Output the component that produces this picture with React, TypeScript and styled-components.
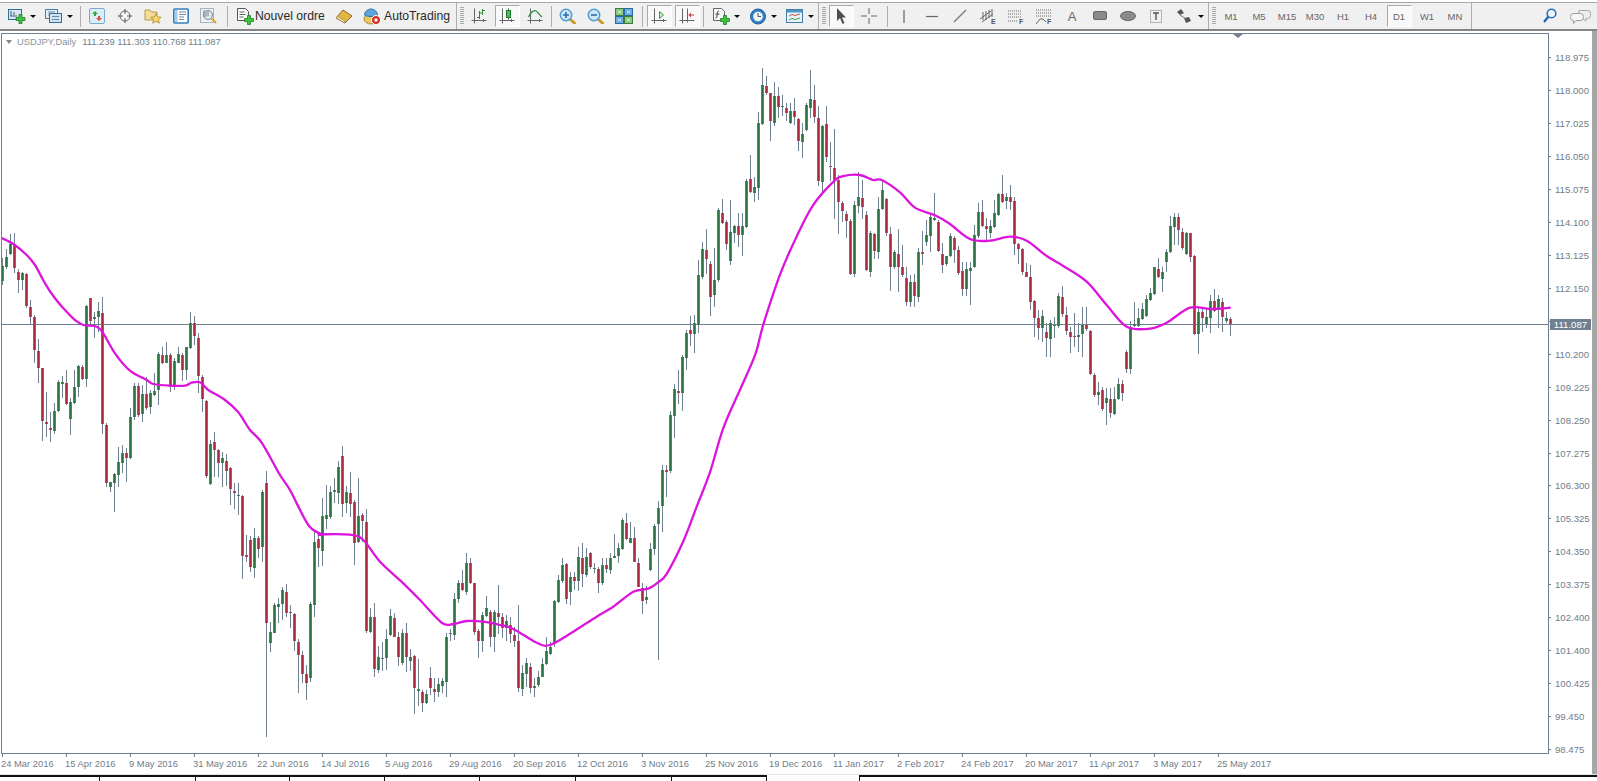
import React from "react";
import styled, { createGlobalStyle } from "styled-components";

type Bar = [number, number, number, number, number];
const G = 1;
const R = 0;

// candle values are read per section of the chart, so each one has its own offset and scale
const sectionA: Bar[] = [
	[85,108,152,165,G],[57,82,110,117,G],[12,42,73,75,G],[8,42,115,130,R],[118,125,150,190,R],[125,130,150,180,G],[130,133,228,233,R],[210,232,260,282,R],
	[255,262,360,398,R],[328,362,415,460,R],[415,415,572,632,R],[485,576,581,620,R],[545,595,601,635,R],[518,542,602,612,G],[450,457,542,545,G],[438,455,463,505,G],
	[420,458,523,525,R],[505,515,568,615,G],[420,472,518,522,G],[405,408,472,500,G],[405,412,448,450,R],[225,228,448,470,G],[203,205,272,282,R],[245,262,268,325,G],
	[215,243,262,305,G],[202,250,582,612,R],[578,585,760,770,R],[755,757,772,785,G],[730,732,758,845,G],[650,697,735,772,G],[645,670,700,728,G],[655,670,683,755,R],
	[535,562,685,688,G],[460,468,562,570,G],[458,468,555,560,R],[465,492,553,575,G],[440,492,535,540,R],[480,490,532,552,G],[430,482,495,498,G],[365,372,480,525,G],
	[352,376,398,402,R],[335,376,398,400,G],[368,376,470,485,R],[385,393,468,480,G],[350,373,398,400,G],[370,376,420,452,R],[350,352,420,450,G],[245,280,355,358,G],
	[258,280,318,345,R],[310,325,438,490,R],[435,440,508,545,R],[510,512,738,745,R],[630,643,763,765,G],[605,637,660,740,R],[658,660,700,740,R],[665,685,700,772,G],
	[672,692,722,768,R],[712,715,778,825,R],[758,783,788,838,R],[758,795,799,855,G],[795,798,977,1048,R],[915,975,980,995,R],[918,930,1010,1025,R],[895,925,1015,1045,G],
	[918,925,958,985,R],[780,785,952,995,G],[722,758,1178,1520,R],[1175,1205,1238,1265,G],[1118,1125,1208,1210,G],[1105,1122,1130,1180,G],[1070,1080,1122,1170,G],[1062,1085,1148,1162,R],
	[1125,1145,1150,1195,R],[1150,1152,1232,1262,R],[1228,1235,1275,1388,R],[1263,1275,1332,1360,R],[1305,1332,1360,1410,R],[1115,1122,1345,1355,G],[905,935,1125,1160,G],[905,928,955,1010,R],
];
const sectionB: Bar[] = [
	[205,258,362,408,G],[165,255,268,298,G],[168,185,262,268,G],[145,180,185,220,G],[92,112,188,222,G],[48,78,222,260,R],[168,185,218,248,G],[125,190,222,260,R],
	[210,217,338,405,R],[145,258,335,340,G],[250,255,272,335,R],[238,275,602,608,R],[535,562,605,610,G],[520,562,718,740,R],[648,682,720,730,G],[635,683,688,722,G],
	[598,628,685,720,G],[538,558,615,618,G],[548,565,620,622,R],[605,620,680,708,R],[598,610,698,705,G],[578,610,682,725,R],[658,682,692,722,G],[675,678,775,852,R],
	[688,778,782,828,G],[780,785,820,845,R],[780,792,820,822,G],[712,745,775,795,R],[745,778,785,815,R],[745,763,785,802,G],[745,753,768,788,G],[610,622,755,802,G],
	[598,608,613,632,G],[490,508,614,630,G],[450,460,508,520,G],[420,460,480,482,R],[370,400,485,495,G],[385,398,460,462,R],[460,460,605,615,R],[598,603,632,685,R],
	[545,556,632,665,G],[498,535,558,560,G],[540,545,622,650,R],[540,546,622,665,G],[465,548,562,612,R],[548,562,595,625,R],[555,572,595,632,G],[560,585,612,640,R],
	[590,615,632,652,R],[525,634,775,785,R],[705,730,778,798,G],[683,700,732,770,G],[700,710,775,790,R],[745,767,775,800,G],[722,740,765,772,G],[685,703,740,742,G],
	[622,663,703,705,G],[635,650,672,675,G],[510,512,640,650,G],[435,450,515,520,G],[385,405,452,460,G],[400,402,508,522,R],[425,442,485,525,G],[425,442,452,480,R],
	[350,382,452,482,G],[338,385,432,470,R],[355,380,435,440,G],[365,370,412,418,R],[398,413,417,430,G],[412,418,458,488,R],[385,405,460,465,G],[385,405,418,430,R],
	[368,385,420,432,G],[312,378,383,385,G],[340,355,378,400,G],[265,270,358,360,G],[248,278,328,330,R],[275,325,338,340,G],[290,325,395,395,R],[385,398,470,472,R],
];
const sectionC: Bar[] = [
	[1365,1378,1410,1445,R],[1372,1400,1408,1420,G],[1260,1275,1330,1332,G],[1210,1215,1275,1292,G],[1150,1168,1210,1565,G],[1055,1070,1162,1232,G],[1055,1070,1075,1140,R],[915,925,1072,1078,G],
	[845,858,928,985,G],[808,862,868,898,R],[770,775,868,915,G],[705,712,778,808,G],[668,705,715,745,R],[665,687,715,765,G],[522,562,690,712,G],[475,492,565,570,G],
	[442,495,518,558,R],[525,532,618,668,R],[490,575,612,645,G],[385,392,575,580,G],[362,398,425,428,R],[418,423,480,495,R],[365,448,523,535,G],[430,432,452,478,G],
	[398,432,456,488,R],[398,432,456,510,G],[310,315,435,438,G],[247,310,345,348,R],[305,330,348,370,G],[135,165,335,365,G],[22,65,168,170,G],[42,68,85,92,R],
	[85,85,160,210,R],[58,95,165,172,G],[70,95,122,150,R],[92,119,122,145,G],[112,125,138,158,R],[112,132,165,168,G],[98,132,148,170,R],[150,155,210,238,R],
	[165,192,213,255,G],[112,118,182,185,G],[27,102,125,150,G],[65,105,148,165,R],[120,150,315,328,R],[170,172,318,345,G],[120,168,252,265,R],[215,276,280,315,R],
	[180,282,312,415,R],[300,312,370,455,R],[368,372,395,422,R],[395,402,420,465,R],[415,420,558,560,R],[368,378,558,565,G],[292,358,382,398,G],[312,360,383,415,R],
	[395,405,548,550,R],[445,450,552,565,G],[452,455,498,520,R],[358,388,500,518,G],[312,340,388,390,G],[360,362,452,458,R],[435,455,540,602,R],[495,500,540,545,G],
	[440,505,540,605,R],[482,540,562,565,R],[540,568,632,642,R],[560,578,632,645,G],[558,578,615,645,R],[490,500,618,630,G],[445,500,505,535,R],[418,456,475,485,G],
	[405,410,458,500,G],[348,413,418,420,G],[418,422,498,502,R],[478,505,535,555,R],[510,512,532,538,G],[452,460,512,515,G],[458,465,495,530,R],[485,495,555,560,R],
];
const sectionD: Bar[] = [
	[305,333,388,408,R],[305,328,388,408,G],[305,323,332,435,G],[195,225,322,325,G],[130,155,228,235,G],[120,155,198,202,R],[175,198,208,240,R],[180,198,218,235,G],
	[120,160,202,205,G],[98,102,165,168,G],[45,102,125,128,R],[98,110,122,148,G],[75,112,125,150,R],[110,123,252,285,R],[248,252,268,312,R],[265,268,335,345,R],
	[310,337,350,352,R],[315,350,425,450,R],[420,423,475,530,R],[450,475,505,540,R],[450,468,505,545,G],[490,515,535,592,R],[480,490,538,590,G],[470,494,498,533,G],
	[400,408,498,505,G],[378,412,463,470,R],[440,465,512,525,R],[500,515,530,578,R],[458,528,532,560,R],[488,525,532,575,G],[440,495,523,590,G],[440,495,508,512,R],
	[510,512,642,645,R],[640,644,706,710,R],[665,695,704,735,G],[680,690,748,752,R],[685,715,730,795,G],[685,718,760,775,R],[682,718,762,765,G],[655,673,718,720,G],
	[660,673,698,722,R],[570,575,628,640,R],[482,500,628,642,G],[425,493,498,500,G],[445,475,498,500,G],[430,448,478,480,G],[405,418,468,470,G],[385,400,420,422,G],
	[320,322,402,405,G],[295,328,352,355,R],[320,335,358,395,G],[268,275,305,335,G],[168,198,275,278,G],[160,170,200,255,G],[158,170,210,255,R],[205,215,265,270,R],
	[215,218,282,285,G],[218,220,290,305,R],[285,288,522,525,R],[445,455,522,582,G],[440,455,475,515,R],[445,472,493,505,G],[405,422,475,518,G],[388,423,452,455,R],
	[405,418,450,505,G],[415,425,470,515,R],[455,475,483,488,G],[470,478,492,527,R],
];

const toPage = (rows: Bar[], off: number, scale: number): Bar[] =>
	rows.map(([h, t, b, l, c]) => [off + h / scale, off + t / scale, off + b / scale, off + l / scale, c] as Bar);

const candles: Bar[] = [
	...toPage(sectionA, 230, 3),
	...toPage(sectionB, 430, 3),
	...toPage(sectionC, 60, 2.608),
	...toPage(sectionD, 160, 3),
];

const pts = (rows: number[][], x0: number, y0: number, sy: number) =>
	rows.map(([x, y]) => [x0 + x / 3, y0 + y / sy]);

const averagePoints = [
	...pts([[5,24],[40,42],[80,75],[105,105],[135,160],[165,205],[195,240],[225,270],[250,285],[290,290],[310,310],[345,370],[390,422],[440,450],[460,462],[510,467],[555,467],[575,458],[600,457],[625,480],[675,510],[715,547],[750,600],[785,638],[840,735],[870,780],[925,885],[965,913]], 0, 230, 3),
	...pts([[0,313],[90,314],[130,330],[180,395],[250,460],[300,510],[365,578],[400,582],[440,573],[490,575],[540,585],[580,597],[650,638],[690,645],[760,605],[830,560],[880,530],[940,485],[985,476]], 320, 430, 3),
	...pts([[55,1362],[80,1340],[130,1255],[170,1165],[210,1075],[250,960],[300,860],[345,770],[370,690],[420,560],[470,460],[520,378],[580,318],[610,303],[660,300],[700,313],[725,313],[780,345],[825,385],[885,405]], 640, 60, 2.608),
	...pts([[0,192],[60,237],[120,242],[180,230],[230,242],[290,288],[340,318],[410,365],[470,435],[530,500],[600,506],[650,488],[720,443],[780,447],[842,443]], 950, 160, 3),
];

// catmull-rom through the read points, the average is a smooth curve
const smoothPath = (p: number[][]) => {
	let d = `M${p[0][0].toFixed(1)} ${p[0][1].toFixed(1)}`;
	for (let i = 0; i < p.length - 1; i++) {
		const a = p[Math.max(i - 1, 0)];
		const b = p[i];
		const c = p[i + 1];
		const e = p[Math.min(i + 2, p.length - 1)];
		const c1x = b[0] + (c[0] - a[0]) / 6;
		const c1y = b[1] + (c[1] - a[1]) / 6;
		const c2x = c[0] - (e[0] - b[0]) / 6;
		const c2y = c[1] - (e[1] - b[1]) / 6;
		d += `C${c1x.toFixed(1)} ${c1y.toFixed(1)} ${c2x.toFixed(1)} ${c2y.toFixed(1)} ${c[0].toFixed(1)} ${c[1].toFixed(1)}`;
	}
	return d;
};

const prices = [
	"118.975","118.000","117.025","116.050","115.075","114.100","113.125","112.150","",
	"110.200","109.225","108.250","107.275","106.300","105.325","104.350","103.375","102.400","101.400","100.425","99.450","98.475",
];
const dates = [
	"24 Mar 2016","15 Apr 2016","9 May 2016","31 May 2016","22 Jun 2016","14 Jul 2016","5 Aug 2016","29 Aug 2016","20 Sep 2016","12 Oct 2016",
	"3 Nov 2016","25 Nov 2016","19 Dec 2016","11 Jan 2017","2 Feb 2017","24 Feb 2017","20 Mar 2017","11 Apr 2017","3 May 2017","25 May 2017",
];
const periods = ["M1","M5","M15","M30","H1","H4","D1","W1","MN"];

const GlobalStyle = createGlobalStyle`
	html, body {
		margin: 0;
		background: #fff;
		overflow: hidden;
	}
`;

const Page = styled.div`
	width: 1597px;
	height: 781px;
	display: flex;
	flex-direction: column;
	font-family: "Liberation Sans", Arial, sans-serif;
	overflow: hidden;
`;

const Toolbar = styled.div`
	margin-top: 2px;
	height: 26px;
	flex: none;
	display: flex;
	align-items: center;
	background: #f0f0f0;
	border-top: 1px solid #a8a8a8;
	border-bottom: 2px solid #858585;
	padding-left: 4px;
`;

const Tool = styled.div<{ $w: number; $ml?: number; $pressed?: boolean }>`
	flex: none;
	box-sizing: border-box;
	width: ${(p) => p.$w}px;
	margin-left: ${(p) => p.$ml || 0}px;
	height: 22px;
	display: flex;
	align-items: center;
	justify-content: center;
	background: ${(p) => (p.$pressed ? "#f9f9f9" : "transparent")};
	${(p) => p.$pressed && "border: 1px solid #fff; border-top-color: #a9a9a9; border-left-color: #a9a9a9;"}
`;

const PressedWrap = styled.div`
	flex: none;
	width: 28px;
	display: flex;
	justify-content: center;
`;

const TextTool = styled.div<{ $w: number; $pl: number; $gap: number }>`
	flex: none;
	width: ${(p) => p.$w}px;
	box-sizing: border-box;
	padding-left: ${(p) => p.$pl}px;
	display: flex;
	align-items: center;
	gap: ${(p) => p.$gap}px;
	font-size: 12.2px;
	color: #2a2a2a;
	white-space: nowrap;
`;

const Drop = styled.div<{ $ml?: number }>`
	flex: none;
	width: 7px;
	margin-left: ${(p) => p.$ml || 0}px;
	display: flex;
	justify-content: center;
	&::before {
		content: "";
		border-left: 3px solid transparent;
		border-right: 3px solid transparent;
		border-top: 3px solid #111;
	}
`;

const Sep = styled.div<{ $ml: number; $mr: number; $full?: boolean }>`
	flex: none;
	width: 1px;
	height: ${(p) => (p.$full ? 26 : 21)}px;
	margin-left: ${(p) => p.$ml}px;
	margin-right: ${(p) => p.$mr}px;
	background: #aeaeae;
`;

const Grip = styled.div`
	flex: none;
	width: 4px;
	height: 18px;
	margin-left: 3px;
	margin-right: 1px;
	background: repeating-linear-gradient(to bottom, #a8a8a8 0 1px, #f0f0f0 1px 2px);
`;

const Period = styled.div`
	flex: none;
	width: 28px;
	display: flex;
	justify-content: center;
	font-size: 9.5px;
	color: #666;
`;

const PeriodFace = styled.div<{ $active?: boolean }>`
	box-sizing: border-box;
	width: 25px;
	height: 22px;
	display: flex;
	align-items: center;
	justify-content: center;
	background: ${(p) => (p.$active ? "#f9f9f9" : "transparent")};
	${(p) => p.$active && "border: 1px solid #fff; border-top-color: #a9a9a9; border-left-color: #a9a9a9;"}
`;

const RightTools = styled.div`
	margin-left: 71px;
	display: flex;
	align-items: center;
	gap: 13px;
`;

const Panel = styled.div`
	flex: 1;
	min-height: 0;
	display: flex;
	padding-left: 1px;
`;

const ChartColumn = styled.div`
	flex: none;
	width: 1548px;
	padding-top: 2px;
	display: flex;
	flex-direction: column;
`;

const Plot = styled.div`
	position: relative;
	flex: none;
	box-sizing: border-box;
	height: 721px;
	border: 1px solid #708090;
	overflow: hidden;
`;

const ChartSvg = styled.svg`
	display: block;
`;

const Legend = styled.div`
	position: absolute;
	left: 4px;
	top: 2px;
	display: flex;
	align-items: center;
	font-size: 9.4px;
	color: #717d89;
	white-space: nowrap;
	&::before {
		content: "";
		margin-right: 5px;
		border-left: 3.5px solid transparent;
		border-right: 3.5px solid transparent;
		border-top: 4px solid #7d8994;
	}
`;

const LegendSymbol = styled.span`
	margin-right: 6px;
	color: #8a95a0;
`;

const DateAxis = styled.div`
	display: flex;
	padding-left: 1px;
`;

const DateCell = styled.div`
	flex: none;
	width: 64px;
	display: flex;
	flex-direction: column;
	&::before {
		content: "";
		width: 1px;
		height: 3px;
		background: #708090;
	}
`;

const DateLabel = styled.span`
	margin-left: -1px;
	margin-top: 1px;
	font-size: 9.4px;
	color: #717d89;
	white-space: nowrap;
`;

const PriceAxis = styled.div`
	position: relative;
	flex: none;
	width: 43px;
	box-sizing: border-box;
	padding-top: 10.5px;
	display: flex;
	flex-direction: column;
`;

const PriceRow = styled.div`
	height: 32.93px;
	display: flex;
	align-items: center;
	font-size: 9.6px;
	color: #717d89;
	&::before {
		content: "";
		width: 2px;
		height: 1px;
		margin-right: 4px;
		background: #708090;
	}
`;

const PriceTag = styled.div`
	position: absolute;
	left: 1px;
	top: 288px;
	width: 41px;
	height: 11px;
	line-height: 11px;
	text-align: center;
	font-size: 9.6px;
	color: #fff;
	background: #708090;
`;

const SideStrip = styled.div`
	flex: none;
	width: 5px;
	background: #a6a6a6;
`;

const Tabs = styled.div`
	flex: none;
	height: 6px;
	display: flex;
	border-top: 1px solid #e2e2e2;
`;

const TabCell = styled.div<{ $w: number }>`
	flex: none;
	box-sizing: border-box;
	width: ${(p) => p.$w}px;
	border-top: 2px solid #111;
	border-right: 1px solid #111;
`;

const ActiveTab = styled.div`
	flex: none;
	width: 92px;
`;

const TabRest = styled.div`
	flex: 1;
	border-top: 2px solid #111;
	border-left: 1px solid #111;
`;

const Axes = () => <path d="M3.500 0.500v15M0.500 12.500H15.500M12.500 11v3" stroke="#666" fill="none" />;

const Plus = ({ x, y }: { x: number; y: number }) => (
	<path
		transform={`translate(${x} ${y})`}
		d="M3 0h3v3h3v3H6v3H3V6H0V3h3z"
		fill="#3fc23f"
		stroke="#1f7f2a"
		strokeWidth="0.8"
	/>
);

const Icon = ({ w = 18, h = 16, children }: { w?: number; h?: number; children: React.ReactNode }) => (
	<svg width={w} height={h} viewBox={`0 0 ${w} ${h}`}>
		{children}
	</svg>
);

const NewChartIcon = () => (
	<Icon>
		<rect x="0.5" y="1.5" width="13" height="10" fill="#d7e8f4" stroke="#2f6f93" />
		<path d="M3 3v5M2 8h7M6 4v3" stroke="#44606f" fill="none" />
		<Plus x={8} y={6.500} />
	</Icon>
);

const ProfilesIcon = () => (
	<Icon>
		<rect x="0.5" y="1.5" width="12" height="9" fill="#e4eef6" stroke="#4a7ea8" />
		<rect x="4.5" y="5.5" width="12" height="9" fill="#cfe2f1" stroke="#3a6f9c" />
		<path d="M3 4h7M3 7h1M7 8.5h7M7 11.5h7" stroke="#6a8aa3" fill="none" />
	</Icon>
);

const MarketIcon = () => (
	<Icon w={16}>
		<rect x="0.5" y="0.5" width="15" height="15" rx="1.5" fill="#dcedf8" stroke="#79aad0" />
		<path d="M6 3l3 3H7v2H5V6H3z" fill="#2ea84a" />
		<path d="M10 13l3-3h-2V8H9v2H7z" fill="#d8503a" />
	</Icon>
);

const TargetIcon = () => (
	<Icon w={16}>
		<circle cx="8" cy="8" r="5" fill="#f7f7f7" stroke="#666" />
		<path d="M8 1v5M8 10v5M1 8h5M10 8h5" stroke="#555" />
	</Icon>
);

const FolderStarIcon = () => (
	<Icon>
		<path d="M1 2h5l1.500 2H13v8H1z" fill="#f4dc95" stroke="#b99a55" />
		<path d="M12 5.500l1.600 3.300 3.600.5-2.600 2.400.7 3.500-3.300-1.800-3.300 1.800.7-3.500-2.600-2.400 3.600-.5z" fill="#f7d766" stroke="#a98a3a" strokeWidth="0.8" />
	</Icon>
);

const TerminalIcon = () => (
	<Icon w={16}>
		<rect x="0.8" y="1" width="14.4" height="14" rx="1" fill="#fdfdfd" stroke="#2f7fbe" strokeWidth="1.6" />
		<rect x="2" y="2" width="2.500" height="12" fill="#a7cbe8" />
		<path d="M6 4h7M6 6.500h7M6 9h5M6 11.500h5" stroke="#6c8ba3" fill="none" />
	</Icon>
);

const TesterIcon = () => (
	<Icon>
		<rect x="0.5" y="0.5" width="13" height="14" fill="#eef1f4" stroke="#a9b4bd" />
		<circle cx="8" cy="7" r="4.500" fill="#dbe9f3" stroke="#7a8e9c" />
		<path d="M4 2v7M6 4v5M8 3v5" stroke="#7c8893" />
		<path d="M11.500 10.500L16 15" stroke="#d9a032" strokeWidth="2" />
	</Icon>
);

const OrderIcon = () => (
	<Icon h={18}>
		<path d="M1.500 1.500h8l3 3v9h-11z" fill="#fbfbfb" stroke="#555" />
		<path d="M3.500 5h5M3.500 7.500h6M3.500 10h4" stroke="#666" fill="none" />
		<Plus x={8.500} y={8.500} />
	</Icon>
);

const BookIcon = () => (
	<Icon>
		<path d="M1 10L8 2l9 6-7 7z" fill="#e6b548" stroke="#8a6a22" />
		<path d="M1 10l9 5v-2L2.500 8.500z" fill="#fbf0c8" stroke="#8a6a22" strokeWidth="0.6" />
	</Icon>
);

const AutoIcon = () => (
	<Icon h={17}>
		<ellipse cx="8" cy="11" rx="7" ry="5" fill="#ecc95f" stroke="#a68a3a" />
		<path d="M1.500 7c0-3 3-6 6.500-6s6.500 3 6.500 6c-3 2-10 2-13 0z" fill="#5aa6dc" stroke="#2f6f9e" />
		<circle cx="13" cy="12" r="4.500" fill="#d92a20" stroke="#fff" />
		<rect x="11.500" y="10.500" width="3" height="3" fill="#fff" />
	</Icon>
);

const BarsIcon = () => (
	<Icon w={16}>
		<Axes />
		<path d="M8.500 3v8M6 9.500h2.500M8.500 5H11M11.500 1v6M11.500 2.500H14" stroke="#2f8a3a" fill="none" />
	</Icon>
);

const CandleIcon = () => (
	<Icon w={16}>
		<Axes />
		<path d="M9.500 0.500v11" stroke="#2a6a33" />
		<rect x="7.500" y="2.500" width="4" height="7" fill="#49c25a" stroke="#26722f" />
	</Icon>
);

const LineIcon = () => (
	<Icon w={16}>
		<Axes />
		<path d="M1.500 9C4 4 7 2 9 3s3 4 6 6" stroke="#2f8a3a" fill="none" strokeWidth="1.2" />
	</Icon>
);

const ZoomIcon = ({ plus }: { plus?: boolean }) => (
	<Icon>
		<path d="M11 11l5.500 5" stroke="#c79a2c" strokeWidth="3" />
		<circle cx="7" cy="7" r="5.700" fill="#cfe6f7" stroke="#4f9bd4" strokeWidth="1.500" />
		<path d={plus ? "M4 7h6M7 4v6" : "M4 7h6"} stroke="#2a6fa8" strokeWidth="1.600" />
	</Icon>
);

const TileIcon = () => (
	<Icon>
		<rect x="0.500" y="0.500" width="8" height="7" fill="#8ecb86" stroke="#3b7d38" />
		<rect x="9.500" y="0.500" width="8" height="7" fill="#6fb0e0" stroke="#2a6a9e" />
		<rect x="0.500" y="8.500" width="8" height="7" fill="#6fb0e0" stroke="#2a6a9e" />
		<rect x="9.500" y="8.500" width="8" height="7" fill="#8ecb86" stroke="#3b7d38" />
		<path d="M3 4h3M12 4h3M3 12h3M12 12h3" stroke="#fff" />
	</Icon>
);

const ScrollIcon = () => (
	<Icon w={16}>
		<Axes />
		<path d="M8.500 3.500l4 3.500-4 3.500z" fill="#c9eec9" stroke="#3a9a4a" />
	</Icon>
);

const ShiftIcon = () => (
	<Icon w={16}>
		<path d="M3.500 0.500v15M0.500 12.500h15M8.500 0.500v14" stroke="#666" fill="none" />
		<path d="M15 7h-3.500" stroke="#c8402f" />
		<path d="M12 4.500L9.500 7l2.500 2.500z" fill="#c8402f" />
	</Icon>
);

const IndicatorIcon = () => (
	<Icon h={18}>
		<path d="M1.500 1.500h8l3 3v9h-11z" fill="#f7f7f7" stroke="#666" />
		<path d="M7 4c-2 0-1.500 2-2 5 0 2-1 2-1.500 2M3.500 7h4" stroke="#444" fill="none" />
		<Plus x={8.500} y={8.500} />
	</Icon>
);

const ClockIcon = () => (
	<Icon h={17}>
		<circle cx="9" cy="8.500" r="7.500" fill="#2f7fc6" stroke="#1f5f9a" />
		<circle cx="9" cy="8.500" r="4.800" fill="#eef4f8" />
		<path d="M9 5v3.500h3" stroke="#555" fill="none" />
	</Icon>
);

const TemplateIcon = () => (
	<Icon>
		<rect x="0.500" y="1.500" width="16" height="13" fill="#eaf2f8" stroke="#3f7fb0" />
		<rect x="1" y="2" width="15" height="2.500" fill="#4f95c8" />
		<path d="M3 8l3-1.500 3 1 5-1.500" stroke="#c05a40" fill="none" />
		<path d="M3 12l3-1.500 3 1 5-1.500" stroke="#4a9a58" fill="none" />
	</Icon>
);

const CursorIcon = () => (
	<Icon w={12} h={18}>
		<path d="M2 1v13l3-3 2.500 6 2-1-2.500-5.500h4z" fill="#4e4e4e" />
	</Icon>
);

const CrossIcon = () => (
	<Icon w={16}>
		<path d="M8 0v6M8 10v6M0 8h6M10 8h6" stroke="#666" />
	</Icon>
);

const VLineIcon = () => (
	<Icon w={4}>
		<path d="M2 2v13" stroke="#666" strokeWidth="1.200" />
	</Icon>
);

const HLineIcon = () => (
	<Icon w={14}>
		<path d="M1 8.500h12" stroke="#666" strokeWidth="1.200" />
	</Icon>
);

const TrendIcon = () => (
	<Icon w={14}>
		<path d="M1 14L13 2" stroke="#777" strokeWidth="1.200" />
	</Icon>
);

const SmallLetter = styled.text`
	font-family: "Liberation Sans", Arial, sans-serif;
	font-size: 7px;
	font-weight: 700;
	fill: #555;
`;

const ChannelIcon = () => (
	<Icon>
		<path d="M1 11l11-8M3 14l11-8M4 4v8M7 3v9M10 2v8M13 1v8" stroke="#666" fill="none" />
		<SmallLetter x="12" y="16">E</SmallLetter>
	</Icon>
);

const FiboIcon = () => (
	<Icon>
		<path d="M1 3h14M1 6h14M1 9h14M1 13h10" stroke="#666" strokeDasharray="1 1" fill="none" />
		<SmallLetter x="12" y="16">F</SmallLetter>
	</Icon>
);

const FanIcon = () => (
	<Icon>
		<path d="M1 2h15M1 5h15M1 8h15" stroke="#666" strokeDasharray="1 1" fill="none" />
		<path d="M1 16l4-5h3l3 3" stroke="#666" fill="none" />
		<SmallLetter x="12" y="16">F</SmallLetter>
	</Icon>
);

const LetterTool = styled.span`
	font-size: 13px;
	color: #666;
`;

const RectIcon = () => (
	<Icon w={14}>
		<rect x="0.500" y="3.500" width="13" height="8" rx="1.500" fill="#8a8a8a" stroke="#666" />
	</Icon>
);

const EllipseIcon = () => (
	<Icon w={16}>
		<ellipse cx="8" cy="8" rx="7.500" ry="4.500" fill="#8a8a8a" stroke="#666" />
	</Icon>
);

const TextBoxIcon = () => (
	<Icon w={14}>
		<rect x="1.500" y="2.500" width="11" height="12" fill="none" stroke="#777" strokeDasharray="1 1" />
		<path d="M4 5h6M7 5v7" stroke="#555" strokeWidth="1.400" />
	</Icon>
);

const ArrowsIcon = () => (
	<Icon w={16}>
		<path d="M1 4l4-3 3 4-4 2z" fill="#555" />
		<path d="M8 10l5-1 2 4-5 2z" fill="#555" />
		<path d="M4 7l6 4" stroke="#777" />
	</Icon>
);

const SearchIcon = () => (
	<Icon w={14}>
		<circle cx="8.500" cy="5.500" r="4.300" fill="#f4f8fb" stroke="#2a6fbf" strokeWidth="1.600" />
		<path d="M5.500 8.500L1 14" stroke="#1f5fae" strokeWidth="2.200" />
	</Icon>
);

const ChatIcon = () => (
	<Icon w={21} h={15}>
		<path d="M9 1.500h8.500a3 3 0 013 3v2a3 3 0 01-3 3H16v2.500l-3-2.500H9z" fill="#eeeeee" stroke="#a5a5a5" />
		<path d="M3.500 4.500h7a3 3 0 013 3v1a3 3 0 01-3 3H6l-2.500 3v-3a3 3 0 01-3-3v-1a3 3 0 013-3z" fill="#f6f6f6" stroke="#9a9a9a" />
	</Icon>
);

const Candles = () => (
	<g shapeRendering="crispEdges">
		{candles.map(([h, t, b, l, c], i) => {
			const x = 2 + 4 * i;
			const top = Math.round(t);
			const bottom = Math.max(Math.round(b), top + 1);
			return (
				<g key={i}>
					<rect x={x} y={Math.round(h)} width="1" height={Math.round(l) - Math.round(h)} fill="#708090" />
					<rect x={x - 1} y={top} width="3" height={bottom - top} fill={c === G ? "#5b7f70" : "#99606c"} />
					<rect x={x} y={top} width="1" height={bottom - top} fill={c === G ? "#2a7442" : "#ad2a40"} />
				</g>
			);
		})}
	</g>
);

export default function App() {
	return (
		<Page>
			<GlobalStyle />
			<Toolbar>
				<Tool $w={25}><NewChartIcon /></Tool>
				<Drop />
				<Tool $w={25} $ml={5}><ProfilesIcon /></Tool>
				<Drop />
				<Sep $ml={7} $mr={2} />
				<Tool $w={28}><MarketIcon /></Tool>
				<Tool $w={28}><TargetIcon /></Tool>
				<Tool $w={28}><FolderStarIcon /></Tool>
				<Tool $w={28}><TerminalIcon /></Tool>
				<Tool $w={28}><TesterIcon /></Tool>
				<Sep $ml={4} $mr={0} />
				<TextTool $w={103} $pl={8} $gap={1}><OrderIcon />Nouvel ordre</TextTool>
				<Tool $w={25}><BookIcon /></Tool>
				<TextTool $w={100} $pl={7} $gap={3}><AutoIcon />AutoTrading</TextTool>
				<Sep $ml={0} $mr={0} $full />
				<Grip />
				<Tool $w={28}><BarsIcon /></Tool>
				<PressedWrap><Tool $w={25} $pressed><CandleIcon /></Tool></PressedWrap>
				<Tool $w={28}><LineIcon /></Tool>
				<Sep $ml={2} $mr={2} />
				<Tool $w={28}><ZoomIcon plus /></Tool>
				<Tool $w={28}><ZoomIcon /></Tool>
				<Tool $w={28}><TileIcon /></Tool>
				<Sep $ml={4} $mr={2} />
				<PressedWrap><Tool $w={25} $pressed><ScrollIcon /></Tool></PressedWrap>
				<PressedWrap><Tool $w={25} $pressed><ShiftIcon /></Tool></PressedWrap>
				<Sep $ml={2} $mr={4} />
				<Tool $w={25}><IndicatorIcon /></Tool>
				<Drop />
				<Tool $w={25} $ml={5}><ClockIcon /></Tool>
				<Drop />
				<Tool $w={25} $ml={5}><TemplateIcon /></Tool>
				<Drop />
				<Sep $ml={4} $mr={0} $full />
				<Grip />
				<PressedWrap><Tool $w={25} $pressed><CursorIcon /></Tool></PressedWrap>
				<Tool $w={28}><CrossIcon /></Tool>
				<Sep $ml={4} $mr={2} />
				<Tool $w={28}><VLineIcon /></Tool>
				<Tool $w={28}><HLineIcon /></Tool>
				<Tool $w={28}><TrendIcon /></Tool>
				<Tool $w={28}><ChannelIcon /></Tool>
				<Tool $w={28}><FiboIcon /></Tool>
				<Tool $w={28}><FanIcon /></Tool>
				<Tool $w={28}><LetterTool>A</LetterTool></Tool>
				<Tool $w={28}><RectIcon /></Tool>
				<Tool $w={28}><EllipseIcon /></Tool>
				<Tool $w={28}><TextBoxIcon /></Tool>
				<Tool $w={27}><ArrowsIcon /></Tool>
				<Drop />
				<Sep $ml={4} $mr={0} $full />
				<Grip />
				{periods.map((name) => (
					<Period key={name}>
						<PeriodFace $active={name === "D1"}>{name}</PeriodFace>
					</Period>
				))}
				<Sep $ml={2} $mr={0} $full />
				<RightTools>
					<SearchIcon />
					<ChatIcon />
				</RightTools>
			</Toolbar>
			<Panel>
				<ChartColumn>
					<Plot>
						<ChartSvg width="1546" height="719" viewBox="2 34 1546 719">
							<path d="M2 324.500H1548" stroke="#708090" />
							<Candles />
							<path d={smoothPath(averagePoints)} fill="none" stroke="#dc14dc" strokeWidth="2.300" strokeLinejoin="round" />
							<polygon points="1233,34 1243,34 1238,38" fill="#708090" />
						</ChartSvg>
						<Legend>
							<LegendSymbol>USDJPY,Daily</LegendSymbol>
							111.239 111.303 110.768 111.087
						</Legend>
					</Plot>
					<DateAxis>
						{dates.map((d) => (
							<DateCell key={d}>
								<DateLabel>{d}</DateLabel>
							</DateCell>
						))}
					</DateAxis>
				</ChartColumn>
				<PriceAxis>
					{prices.map((p, i) => (
						<PriceRow key={i}>{p}</PriceRow>
					))}
					<PriceTag>111.087</PriceTag>
				</PriceAxis>
				<SideStrip />
			</Panel>
			<Tabs>
				<TabCell $w={100} />
				{[96, 94, 95, 95, 96, 96, 95].map((w, i) => (
					<TabCell key={i} $w={w} />
				))}
				<ActiveTab />
				<TabRest />
			</Tabs>
		</Page>
	);
}
